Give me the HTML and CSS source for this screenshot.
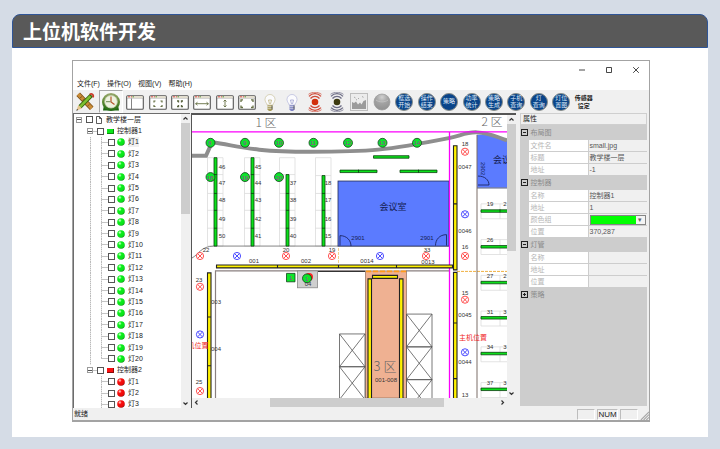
FILE: index.html
```html
<!DOCTYPE html>
<html lang="zh-CN">
<head>
<meta charset="utf-8">
<meta name="viewport" content="width=device-width, initial-scale=1">
<title>上位机软件开发</title>
<link rel="stylesheet" href="styles.css">
</head>
<body>
<svg class="defs" aria-hidden="true">
  <defs>
    <radialGradient id="gGreen" cx=".35" cy=".3" r=".8"><stop offset="0" stop-color="#e8ffe0"/><stop offset=".3" stop-color="#0bf01a"/><stop offset=".75" stop-color="#0be01a"/><stop offset="1" stop-color="#056c0a"/></radialGradient>
    <radialGradient id="gRed" cx=".35" cy=".3" r=".8"><stop offset="0" stop-color="#ffe4dc"/><stop offset=".3" stop-color="#fa0f0f"/><stop offset=".75" stop-color="#e80808"/><stop offset="1" stop-color="#6c0505"/></radialGradient>
    <radialGradient id="gGray" cx=".5" cy=".2" r=".9"><stop offset="0" stop-color="#d0d0d0"/><stop offset=".4" stop-color="#a4a4a4"/><stop offset="1" stop-color="#8c8c8c"/></radialGradient>
    <linearGradient id="gClock" x1="0" y1="0" x2="0" y2="1"><stop offset="0" stop-color="#9aa86e"/><stop offset=".5" stop-color="#5d8a34"/><stop offset="1" stop-color="#1f6a12"/></linearGradient>
    <symbol id="on" viewBox="0 0 8 8"><circle cx="4" cy="4" r="3.8" fill="url(#gGreen)"/></symbol>
    <symbol id="off" viewBox="0 0 8 8"><circle cx="4" cy="4" r="3.8" fill="url(#gRed)"/></symbol>
    <symbol id="win" viewBox="0 0 18 16"><rect x=".7" y="1.7" width="16.6" height="13.6" rx="1" fill="#fff" stroke="#555" stroke-width="1.1"/><rect x="1.4" y="2.3" width="15.2" height="1.6" fill="#e8e3cf"/><path d="M2 2.8h2M5 2.8h1" stroke="#e05050"/><path d="M6.500 2.800h1.500" stroke="#5a9a3a"/><path d="M1 4.300h16" stroke="#999" stroke-width=".5"/></symbol>
    <symbol id="bulb" viewBox="0 0 18 20"><path d="M4 7.500a5 5 0 0 1 10 0c0 2.500-1.800 3.500-2.200 5.500H6.200C5.800 11 4 10 4 7.500z" fill="#fbfbfd" stroke="currentColor" stroke-opacity=".55" stroke-width=".7"/><path d="M7.500 8l1 4M10.500 8l-1 4M7.500 8h3" stroke="currentColor" stroke-width=".6" fill="none"/><path d="M6.500 13.300h5v4l-1.300 1.700H7.800l-1.300-1.700z" fill="currentColor"/><path d="M6.500 14.500h5M6.500 16.300h5" stroke="#eee" stroke-width=".6"/><path d="M11 13.500v4" stroke="#444" stroke-width=".8"/></symbol>
    <symbol id="radar" viewBox="0 0 18 20"><circle cx="9" cy="10" r="3.300" fill="var(--core)"/><g fill="none" stroke="currentColor" stroke-width="1.300"><path d="M4.500 6.500c2.400-2.800 6.600-2.800 9 0M4.500 13.500c2.400 2.800 6.600 2.800 9 0M3 4.400c3.300-3.600 8.700-3.600 12 0M3 15.600c3.300 3.600 8.700 3.600 12 0"/><path d="M2.500 2.300c3.900-2.700 9.100-2.700 13 0M2.500 17.700c3.900 2.700 9.100 2.700 13 0" stroke-width=".7"/></g></symbol>
    <symbol id="lamp" viewBox="-4 -4 8 8" overflow="visible"><circle r="3.600" fill="#fff" stroke="currentColor" stroke-width=".9"/><path d="M-2.200-2.200L2.200 2.200M2.200-2.200L-2.200 2.200" stroke="currentColor" stroke-width=".9"/></symbol>
  </defs>
</svg>

<main class="card">
  <h1 class="card-title">上位机软件开发</h1>
  <section class="window">
    <div class="titlebar">
      <button type="button" aria-label="最小化"><svg viewBox="0 0 8 8"><path d="M1 4h6"/></svg></button>
      <button type="button" aria-label="最大化"><svg viewBox="0 0 8 8"><path d="M1.500 1.500h5v5h-5z"/></svg></button>
      <button type="button" aria-label="关闭"><svg viewBox="0 0 8 8"><path d="M1.200 1.200l5.600 5.600M6.800 1.200L1.200 6.800"/></svg></button>
    </div>
    <nav class="menubar">
      <button type="button">文件(F)</button>
      <button type="button">操作(O)</button>
      <button type="button">视图(V)</button>
      <button type="button">帮助(H)</button>
    </nav>
    <div class="toolbar">
      <button type="button" class="tool wide" aria-label="编辑"><svg class="i20" viewBox="0 0 20 20"><path d="M3.200 2.200l13.500 14" stroke="#7b4d14" stroke-width="5"/><path d="M3.200 2.200l13.500 14" stroke="#c88b36" stroke-width="3.400"/><path d="M5 6l2-1.500M7.500 8.500l2-1.500M12.500 14l2-1.500" stroke="#6a4212" stroke-width=".7"/><path d="M16.500 3.200L5 14.800" stroke="#34620f" stroke-width="4.200"/><path d="M15.500 4.200L5 14.800" stroke="#7cc030" stroke-width="2.600"/><path d="M14.800 2.600c1.800-1.800 4.400.4 3 2.800" fill="none" stroke="#c83a28" stroke-width="1.800"/><path d="M3.300 13l3.600 3.600L1.500 18.500z" fill="#e5c48c"/><path d="M2 17l1.200 1-1.900.7z" fill="#222"/></svg></button>
      <button type="button" class="tool wide pressed" aria-label="定时"><svg class="i20" viewBox="0 0 20 20"><path d="M3 13l-1 5.500h16L17 13z" fill="#1d6710"/><circle cx="10" cy="10" r="9" fill="url(#gClock)"/><circle cx="10" cy="9.700" r="6.300" fill="#eef2df" stroke="#c7cfae" stroke-width=".8"/><path d="M10 4.500v5.400l3.500 2.600" fill="none" stroke="#b5562c" stroke-width="1.200"/><path d="M5 9.700h4.500" stroke="#6d8753"/></svg></button>
      <div class="tools">
        <button type="button" class="tool" aria-label="左侧栏"><svg class="i18" viewBox="0 0 18 16"><use href="#win"/><path d="M5.500 4.500v10.500" stroke="#666" stroke-width=".8"/></svg></button>
        <button type="button" class="tool" aria-label="放大"><svg class="i18" viewBox="0 0 18 16"><use href="#win"/><path d="M5 8.500v-1.500h1.500M11.500 7h1.500v1.500M5 11v1.500h1.500M13 11v1.500h-1.500" fill="none" stroke="#667044" stroke-width="1.200"/></svg></button>
        <button type="button" class="tool" aria-label="缩小"><svg class="i18" viewBox="0 0 18 16"><use href="#win"/><path d="M6 7h1.500v1.500M12 7h-1.500v1.500M6 12.500h1.500V11M12 12.500h-1.500V11" fill="none" stroke="#5a6440" stroke-width="1.300"/></svg></button>
        <button type="button" class="tool" aria-label="适合宽度"><svg class="i18" viewBox="0 0 18 16"><use href="#win"/><path d="M2.500 9.700h13M4.500 8.200L2.700 9.700l1.800 1.500M13.500 8.200l1.800 1.500-1.800 1.500" fill="none" stroke="#667044" stroke-width=".9"/></svg></button>
        <button type="button" class="tool" aria-label="适合高度"><svg class="i18" viewBox="0 0 18 16"><use href="#win"/><path d="M9 6v7M7.500 7.500L9 6l1.500 1.500M7.500 11.500L9 13l1.500-1.500" fill="none" stroke="#667044" stroke-width=".9"/></svg></button>
        <button type="button" class="tool" aria-label="适合窗口"><svg class="i18" viewBox="0 0 18 16"><use href="#win"/><path d="M3 8V5.800h2M13 5.800h2V8M3 11.500v2h2M15 11.500v2h-2" fill="none" stroke="#667044" stroke-width="1.300"/></svg></button>
        <button type="button" class="tool warm" aria-label="开灯"><svg class="i20" viewBox="0 0 18 20"><use href="#bulb"/></svg></button>
        <button type="button" class="tool cool" aria-label="关灯"><svg class="i20" viewBox="0 0 18 20"><use href="#bulb"/></svg></button>
        <button type="button" class="tool live" aria-label="感应开"><svg class="i20" viewBox="0 0 18 20"><use href="#radar"/></svg></button>
        <button type="button" class="tool idle" aria-label="感应关"><svg class="i20" viewBox="0 0 18 20"><use href="#radar"/></svg></button>
        <button type="button" class="tool" aria-label="图片"><svg class="i18 tall" viewBox="0 0 18 18"><rect x=".5" y=".5" width="17" height="17" fill="#ececec" stroke="#bdbdbd"/><path d="M2 16V9l2 1 2-1.500 2 3 2-2 1.500 2 2-3.500 2.500-1v9z" fill="#9b9b9b"/><path d="M4 4l1.500 1M8 5l1 1M12 3.500l1.500.8M6 6.500l1 .5" stroke="#aaa"/></svg></button>
        <button type="button" class="tool" aria-label="停止"><svg class="i18 tall" viewBox="0 0 18 18"><circle cx="9" cy="9" r="8" fill="url(#gGray)" stroke="#999" stroke-width=".7"/><path d="M3 7c3 2.500 9 2.500 12 0" fill="none" stroke="#c4c4c4" stroke-width=".8"/></svg></button>
        <button type="button" class="tool round"><span>框选<br>开始</span></button>
        <button type="button" class="tool round"><span>操作<br>结束</span></button>
        <button type="button" class="tool round"><span>策略</span></button>
        <button type="button" class="tool round"><span>功率<br>统计</span></button>
        <button type="button" class="tool round"><span>策略<br>生成</span></button>
        <button type="button" class="tool round"><span>子机<br>查询</span></button>
        <button type="button" class="tool round"><span>灯<br>查询</span></button>
        <button type="button" class="tool round"><span>灯位<br>置图</span></button>
        <button type="button" class="tool plain"><span>传感器<br>设定</span></button>
      </div>
    </div>

    <div class="panes">
      <div class="tree-pane">
        <ul class="tree">
          <li class="root"><button type="button" class="exp" aria-label="折叠"></button><label><input type="checkbox"><svg viewBox="0 0 8 8"><path d="M1.500.5h3l2 2v5h-5zM4.500.5v2h2" fill="#fff" stroke="#333" stroke-width=".8"/></svg>教学楼一层</label></li>
          <li class="ctrl"><button type="button" class="exp" aria-label="折叠"></button><label><input type="checkbox"><svg viewBox="0 0 8 8"><path d="M1 2h7v5H1z" fill="#0a8a0a"/><path d="M1 2h6v4H1z" fill="#0be81a"/></svg>控制器1</label></li>
          <li class="lamp joined sel"><label><input type="checkbox"><svg><use href="#on"/></svg><span>灯1</span></label></li>
          <li class="lamp joined"><label><input type="checkbox"><svg><use href="#on"/></svg>灯2</label></li>
          <li class="lamp joined"><label><input type="checkbox"><svg><use href="#on"/></svg>灯3</label></li>
          <li class="lamp joined"><label><input type="checkbox"><svg><use href="#on"/></svg>灯4</label></li>
          <li class="lamp joined"><label><input type="checkbox"><svg><use href="#on"/></svg>灯5</label></li>
          <li class="lamp joined"><label><input type="checkbox"><svg><use href="#on"/></svg>灯6</label></li>
          <li class="lamp joined"><label><input type="checkbox"><svg><use href="#on"/></svg>灯7</label></li>
          <li class="lamp joined"><label><input type="checkbox"><svg><use href="#on"/></svg>灯8</label></li>
          <li class="lamp joined"><label><input type="checkbox"><svg><use href="#on"/></svg>灯9</label></li>
          <li class="lamp joined"><label><input type="checkbox"><svg><use href="#on"/></svg>灯10</label></li>
          <li class="lamp joined"><label><input type="checkbox"><svg><use href="#on"/></svg>灯11</label></li>
          <li class="lamp joined"><label><input type="checkbox"><svg><use href="#on"/></svg>灯12</label></li>
          <li class="lamp joined"><label><input type="checkbox"><svg><use href="#on"/></svg>灯13</label></li>
          <li class="lamp joined"><label><input type="checkbox"><svg><use href="#on"/></svg>灯14</label></li>
          <li class="lamp joined"><label><input type="checkbox"><svg><use href="#on"/></svg>灯15</label></li>
          <li class="lamp joined"><label><input type="checkbox"><svg><use href="#on"/></svg>灯16</label></li>
          <li class="lamp joined"><label><input type="checkbox"><svg><use href="#on"/></svg>灯17</label></li>
          <li class="lamp joined"><label><input type="checkbox"><svg><use href="#on"/></svg>灯18</label></li>
          <li class="lamp joined"><label><input type="checkbox"><svg><use href="#on"/></svg>灯19</label></li>
          <li class="lamp joined last"><label><input type="checkbox"><svg><use href="#on"/></svg>灯20</label></li>
          <li class="ctrl"><button type="button" class="exp" aria-label="折叠"></button><label><input type="checkbox"><svg viewBox="0 0 8 8"><path d="M1 2h7v5H1z" fill="#8a0a0a"/><path d="M1 2h6v4H1z" fill="#fa0f0f"/></svg>控制器2</label></li>
          <li class="lamp"><label><input type="checkbox"><svg><use href="#off"/></svg>灯1</label></li>
          <li class="lamp"><label><input type="checkbox"><svg><use href="#off"/></svg>灯2</label></li>
          <li class="lamp"><label><input type="checkbox"><svg><use href="#off"/></svg>灯3</label></li>
        </ul>
        <div class="vbar"><svg viewBox="0 0 9 9"><path d="M2.500 5.500l2-2 2 2"/></svg><i class="thumb tree-thumb"></i><svg class="end" viewBox="0 0 9 9"><path d="M2.500 3.500l2 2 2-2"/></svg></div>
      </div>

      <div class="plan-pane">
        <svg class="plan" viewBox="192 114 315 285" preserveAspectRatio="none" role="img" aria-label="楼层平面图">
          <g fill="none" stroke="#dcdcdc" stroke-width=".8">
            <path d="M207.500 157h15.500v89h-15.500zM207.500 174h15.500M207.500 193h15.500M207.500 210h15.500M207.500 228h15.500"/>
            <path d="M244.500 157h15.500v89h-15.500zM244.500 174h15.500M244.500 193h15.500M244.500 210h15.500M244.500 228h15.500"/>
            <path d="M279.500 157h15.500v89h-15.500zM279.500 174h15.500M279.500 193h15.500M279.500 210h15.500M279.500 228h15.500"/>
            <path d="M315.500 157h15.500v89h-15.500zM315.500 175h15.500M315.500 193h15.500M315.500 210h15.500M315.500 228h15.500"/>
            <path d="M507 203.500h-26v15h26M500 203.500v15M507 239.500h-26v15h26M500 239.500v15M507 275.500h-26v15h26M500 275.500v15M507 311.500h-26v15h26M500 311.500v15M507 347.500h-26v15h26M500 347.500v15M507 383.500h-26v15h26M500 383.500v15"/>
          </g>
          <path d="M192 258c6-3 9-12 22-12h235" fill="none" stroke="#777" stroke-width=".9"/>
          <path d="M215.500 399V271h150M406 271h43" fill="none" stroke="#8a8080" stroke-width="1.200"/>
          <path d="M318 271.500h47" stroke="#222"/>
          <path d="M338.500 248v16" stroke="#f3d08c" stroke-dasharray="3 1"/>
          <path d="M457 271.500h50" stroke="#f0b040" stroke-dasharray="3 1"/>
          <rect x="338" y="180.500" width="111" height="65.500" fill="#5b7bff" stroke="#222b55" stroke-width=".8"/>
          <path d="M477 134q15-2 30 6v47h-30z" fill="#5b7bff"/>
          <path d="M477 187.500h30" stroke="#222b55" stroke-width=".8"/>
          <path d="M477 134v265" stroke="#7a6c66"/>
          <path d="M340 235.500c7 0 11 5 11 10.500M340 235.500v10M446.500 234.500c-7 0-11 5-11 11M446.500 234.500v11M478 175.500c7 0 11 4 11 9h-11" fill="none" stroke="#141c50" stroke-width=".8"/>
          <path d="M192 155h14l6-13.500c25 3 35 9.500 98 9.500 60 0 75-1 140-14 10-2 17-6 27-5.500 12 .5 18 4 30 8" fill="none" stroke="#8e8e8e" stroke-width="4"/>
          <path d="M192 131h315M449.500 131v268" fill="none" stroke="#fb00fb" stroke-width="1.300"/>

          <g fill="#0be01a" stroke="#093f0c" stroke-width=".8">
            <path d="M214 157h3v89h-3zM251 157h3v89h-3zM286 174h3v72h-3zM322 175h3v71h-3z"/>
            <path d="M373.500 155h35.500v2.500h-35.500zM340 169.500h37v2.500h-37zM400 169.500h37v2.500h-37z"/>
            <path d="M481 209.500h28v2.500h-28zM481 245.500h28v2.500h-28zM481 281.500h28v2.500h-28zM481 317h28v2.500h-28zM481 353h28v2.500h-28zM481 389h28v2.500h-28z"/>
            <path d="M214 174h3M214 193h3M214 210h3M214 228h3M251 174h3M251 193h3M251 210h3M251 228h3M286 193h3M286 210h3M286 228h3M322 193h3M322 210h3M322 228h3M358.500 169v3M418.500 169v3M500 209v3"/>
          </g>

          <path d="M365.500 271h41v128h-41z" fill="#efb192" stroke="#8a6a5a" stroke-width=".7"/>
          <path d="M366 271.500h40" stroke="#ff9a1a" stroke-width="1.600" stroke-dasharray="5 2"/>
          <g fill="#fff200" stroke="#222" stroke-width="1.100">
            <path d="M216.500 265h236v3h-236zM453.500 145h3.500v125h-3.500zM453.500 272.500h3.500v128h-3.500zM207.500 273h3.500v128h-3.500zM368 279h3.500v122H368zM399.500 279h3.500v122h-3.500zM372.500 275.500h25v3h-25z"/>
            <path d="M277.500 265v3M338.500 265v3M396.500 265v3M453 203.500h4M453 323.500h4M453 379.500h4M207 317.500h4M207 366.500h4"/>
          </g>
          <g fill="none" stroke="#555" stroke-width=".8">
            <path d="M339.500 334.500h25.500v33h-25.500zl25.500 33M365 334.500l-25.500 33M339.500 367.500h25.500v33h-25.500zl25.500 33M365 367.500l-25.500 33"/>
            <path d="M406.500 314.500h25.500v33h-25.500zl25.500 33M432 314.500l-25.500 33M406.500 347.500h25.500v33h-25.500zl25.500 33M432 347.500l-25.500 33M406.500 380.500h25.500v33h-25.500zl25.500 33M432 380.500l-25.500 33"/>
          </g>

          <g class="red">
            <use href="#lamp" x="196" y="252" width="8" height="8"/><use href="#lamp" x="282" y="252" width="8" height="8"/><use href="#lamp" x="328" y="252" width="8" height="8"/><use href="#lamp" x="422" y="252" width="8" height="8"/>
            <use href="#lamp" x="461" y="147" width="8" height="8"/><use href="#lamp" x="461" y="252" width="8" height="8"/><use href="#lamp" x="461" y="296" width="8" height="8"/><use href="#lamp" x="196" y="283" width="8" height="8"/><use href="#lamp" x="196" y="388" width="8" height="8"/>
          </g>
          <g class="blue">
            <use href="#lamp" x="233" y="252" width="8" height="8"/><use href="#lamp" x="376" y="252" width="8" height="8"/><use href="#lamp" x="461" y="210" width="8" height="8"/><use href="#lamp" x="461" y="349" width="8" height="8"/><use href="#lamp" x="196" y="331" width="8" height="8"/>
          </g>

          <rect x="297.500" y="271" width="20" height="17" fill="#cfcfcf" stroke="#888" stroke-width=".8"/>
          <circle cx="309" cy="277" r="4" fill="#f22"/>
          <g fill="#0be62a" stroke="#14401a" stroke-width=".8">
            <circle cx="210.500" cy="142" r="4.500"/><circle cx="245" cy="142" r="4.500"/><circle cx="279" cy="142" r="4.500"/><circle cx="313.500" cy="142" r="4.500"/><circle cx="348" cy="142" r="4.500"/><circle cx="382.500" cy="142" r="4.500"/><circle cx="417" cy="142" r="4.500"/>
            <circle cx="210.500" cy="176.500" r="4.500"/><circle cx="245" cy="176.500" r="4.500"/><circle cx="279" cy="176.500" r="4.500"/>
            <circle cx="307" cy="278.500" r="4.500"/><path d="M286.500 273.500h8.500v8.500h-8.500z"/>
          </g>
          <g class="tag">
            <text x="210" y="144">8</text><text x="245" y="144">9</text><text x="279" y="144">10</text><text x="313" y="144">11</text><text x="348" y="144">12</text><text x="382" y="144">13</text><text x="417" y="144">14</text>
            <text x="210" y="179">18</text><text x="245" y="179">19</text><text x="279" y="179">20</text><text x="291" y="280">1</text><text x="307" y="281">1</text>
          </g>
          <g class="num">
            <text x="222" y="168">46</text><text x="222" y="185">47</text><text x="222" y="202">48</text><text x="222" y="221">49</text><text x="222" y="238">50</text>
            <text x="258" y="168">45</text><text x="258" y="185">44</text><text x="258" y="202">43</text><text x="258" y="221">42</text><text x="258" y="238">41</text>
            <text x="293" y="185">37</text><text x="293" y="202">38</text><text x="293" y="221">39</text><text x="293" y="238">40</text>
            <text x="328" y="185">18</text><text x="328" y="202">17</text><text x="328" y="221">16</text><text x="328" y="238">15</text>
            <text x="206" y="252">22</text><text x="286" y="252">20</text><text x="332" y="252">19</text><text x="427" y="252">33</text>
            <text x="254" y="263">001</text><text x="306" y="263">002</text><text x="367" y="263">0014</text><text x="428" y="264">0013</text>
            <text x="199" y="282">23</text><text x="216" y="304">003</text><text x="216" y="352">004</text><text x="199" y="385">25</text><text x="308" y="286">04</text>
            <text x="465" y="145">18</text><text x="465" y="168">0047</text><text x="465" y="233">0046</text><text x="465" y="249">16</text><text x="465" y="295">15</text><text x="465" y="317">0045</text><text x="465" y="365">0044</text><text x="465" y="398">13</text>
            <text x="490" y="206">19</text><text x="490" y="242">26</text><text x="490" y="278">27</text><text x="490" y="314">31</text><text x="490" y="350">34</text><text x="490" y="386">37</text>
            <text x="505" y="206">2</text><text x="505" y="278">2</text><text x="505" y="314">3</text><text x="505" y="350">3</text><text x="505" y="386">3</text>
            <text x="386" y="383">001-008</text>
            <g class="navy"><text x="358" y="240">2901</text><text x="427" y="240">2901</text><text transform="translate(481 168) rotate(90)">2902</text></g>
          </g>
          <g class="zone"><text x="266" y="126">1 区</text><text x="492" y="125">2 区</text><text x="385" y="372" class="big">3 区</text></g>
          <g class="room"><text x="393" y="210">会议室</text><text x="502" y="162">会议</text></g>
          <g class="host"><text x="473" y="341">主机位置</text><text x="198" y="349">机位置</text></g>
        </svg>
        <div class="vbar"><svg viewBox="0 0 9 9"><path d="M2.500 5.500l2-2 2 2"/></svg><i class="thumb plan-thumb"></i><svg class="end" viewBox="0 0 9 9"><path d="M2.500 3.500l2 2 2-2"/></svg></div>
        <div class="hbar"><svg viewBox="0 0 9 9"><path d="M5.500 2.500l-2 2 2 2"/></svg><span class="track"><i class="thumb"></i></span><svg viewBox="0 0 9 9"><path d="M3.500 2.500l2 2-2 2"/></svg></div>
      </div>

      <aside class="props">
        <h2>属性</h2>
        <div class="prop-body">
          <table>
            <colgroup><col class="c-exp"><col class="c-name"><col></colgroup>
            <tbody>
              <tr class="grp"><td><button type="button" aria-label="折叠布局图"></button></td><th colspan="2">布局图</th></tr>
              <tr><td></td><th>文件名</th><td>small.jpg</td></tr>
              <tr><td></td><th>标题</th><td>教学楼一层</td></tr>
              <tr><td></td><th>地址</th><td>-1</td></tr>
              <tr class="grp"><td><button type="button" aria-label="折叠控制器"></button></td><th colspan="2">控制器</th></tr>
              <tr><td></td><th>名称</th><td>控制器1</td></tr>
              <tr><td></td><th>地址</th><td>1</td></tr>
              <tr><td></td><th><label for="color">颜色组</label></th><td><div class="pick"><select id="color"><option value="lime" label=" "></option></select></div></td></tr>
              <tr><td></td><th>位置</th><td>370,287</td></tr>
              <tr class="grp"><td><button type="button" aria-label="折叠灯管"></button></td><th colspan="2">灯管</th></tr>
              <tr><td></td><th>名称</th><td></td></tr>
              <tr><td></td><th>地址</th><td></td></tr>
              <tr><td></td><th>位置</th><td></td></tr>
              <tr class="grp"><td><button type="button" class="plus" aria-label="展开策略"></button></td><th colspan="2">策略</th></tr>
            </tbody>
          </table>
        </div>
      </aside>
    </div>

    <footer class="status">
      <span class="ready">就绪</span>
      <span class="cell"></span><span class="cell num-lock">NUM</span><span class="cell"></span>
      <svg class="grip" viewBox="0 0 10 10"><path d="M1 10l9-9M4 10l6-6M7 10l3-3" stroke="#a5a5a5" stroke-width="1.200"/></svg>
    </footer>
  </section>
</main>
</body>
</html>
```
FILE: styles.css
```css
* { box-sizing: border-box; }

html, body { height: 100%; }

body {
  margin: 0;
  padding: 14px 12px 12px;
  background: #d5dce6;
  color: #222;
  font: 7px/10px "Liberation Sans", "Noto Sans CJK SC", sans-serif;
}

button {
  margin: 0;
  padding: 0;
  border: 0;
  background: none;
  color: inherit;
  font: inherit;
}

svg { display: block; flex: none; }
.defs { position: absolute; width: 0; height: 0; }

.card {
  display: flex;
  flex-direction: column;
  height: 100%;
  background: #fff;
  border-radius: 8px 8px 0 0;
}

.card-title {
  flex: none;
  margin: 0;
  padding: 0 10px;
  border: 1px solid #2f5597;
  border-radius: 8px 8px 0 0;
  background: #595959;
  color: #fff;
  font: bold 19px/32px "Noto Sans CJK SC", sans-serif;
}

.window {
  flex: 1;
  display: flex;
  flex-direction: column;
  min-height: 0;
  margin: 12px 58px 15px 60px;
  border: 1px solid #a3a3a3;
  border-width: 1px 1px 2px;
  background: #f0f0f0;
}

/* caption and menu */
.titlebar {
  display: flex;
  justify-content: flex-end;
  height: 17px;
  background: #fff;
}
.titlebar button { display: grid; place-items: center; width: 27px; }
.titlebar svg { width: 8px; height: 8px; fill: none; stroke: #333; stroke-width: .9; }

.menubar {
  display: flex;
  gap: 7px;
  height: 12px;
  padding-left: 4px;
  background: #fff;
}

/* toolbar */
.toolbar {
  display: flex;
  height: 23px;
  padding-right: 54px;
}
.tool {
  display: grid;
  place-items: center;
  flex: 1 1 0;
  min-width: 0;
}
.tool.wide { flex: none; width: 24px; }
.tool.pressed {
  margin: 0 1px 0 2px;
  border: 1px solid #a8a8a8;
  border-color: #a8a8a8 #fff #fff #a8a8a8;
  background: #f7f7f7;
}
.tools { flex: 1; display: flex; }
.i20 { width: 20px; height: 20px; }
.i18 { width: 18px; height: 16px; }
.i18.tall { height: 18px; }
.warm { color: #a89c58; }
.cool { color: #7f84c4; }
.live { color: #cf4a38; --core: #d2300c; }
.idle { color: #6e6e86; --core: #3c3a10; }
.round span {
  display: grid;
  place-content: center;
  width: 18px;
  height: 18px;
  border: 1px solid #8a8f8c;
  border-radius: 50%;
  background: #0a4489;
  color: #dfe9f8;
  font-size: 6px;
  line-height: 7px;
  white-space: nowrap;
}
.plain { font-size: 6px; line-height: 8px; font-weight: bold; white-space: nowrap; }

/* three panes */
.panes {
  flex: 1;
  display: grid;
  grid-template-columns: 117px 1fr 129px;
  grid-template-rows: 100%;
  gap: 1px;
  min-height: 0;
}

.tree-pane {
  display: flex;
  min-height: 0;
  border: 1px solid #6c6c6c;
  border-width: 1px 0 0 1px;
  background: #fff;
  overflow: hidden;
}
.tree {
  flex: 1;
  display: flex;
  flex-direction: column;
  margin: 0 0 -2px;
  padding: 0;
  list-style: none;
}
.tree li { flex: 1 1 0; display: flex; align-items: center; min-height: 0; }
.tree label { display: flex; align-items: center; height: 10px; }
.tree svg { width: 8px; height: 8px; margin: 0 3px 0 2px; }
.tree input {
  appearance: none;
  width: 7px;
  height: 7px;
  margin: 0;
  border: 1px solid #555;
  background: #fff;
}
.root { padding-left: 2px; }
.ctrl { padding-left: 13px; background: linear-gradient(#c4c4c4, #c4c4c4) 19px 50% / 5px 1px no-repeat; }
.lamp {
  padding-left: 34px;
  background:
    linear-gradient(#c4c4c4, #c4c4c4) 27px 50% / 7px 1px no-repeat,
    repeating-linear-gradient(#bbb 0 1px, #e4e4e4 1px 2px) 27px 0 / 1px 100% no-repeat;
}
.lamp.joined {
  background:
    linear-gradient(#c4c4c4, #c4c4c4) 27px 50% / 7px 1px no-repeat,
    repeating-linear-gradient(#bbb 0 1px, #e4e4e4 1px 2px) 27px 0 / 1px 100% no-repeat,
    repeating-linear-gradient(#bbb 0 1px, #e4e4e4 1px 2px) 16px 0 / 1px 100% no-repeat;
}
.lamp.joined.last {
  background:
    linear-gradient(#c4c4c4, #c4c4c4) 27px 50% / 7px 1px no-repeat,
    repeating-linear-gradient(#bbb 0 1px, #e4e4e4 1px 2px) 27px 0 / 1px 50% no-repeat,
    repeating-linear-gradient(#bbb 0 1px, #e4e4e4 1px 2px) 16px 0 / 1px 100% no-repeat;
}
.sel span { background: #f0f0f0; }
.exp {
  width: 6px;
  height: 6px;
  margin-right: 4px;
  border: 1px solid #9a9a9a;
  background: linear-gradient(#555, #555) center / 4px 1px no-repeat #fff;
}

/* scroll bars */
.vbar, .hbar { display: flex; background: #f0f0f0; }
.vbar { flex-direction: column; width: 9px; }
.vbar svg, .hbar svg { width: 9px; height: 9px; fill: none; stroke: #333; stroke-width: 1.2; }
.vbar .end { margin-top: auto; }
.thumb { background: #cdcdcd; }
.tree-thumb { height: 31%; }
.plan-thumb { height: 45%; }

.plan-pane {
  display: grid;
  grid-template: minmax(0, 1fr) 9px / minmax(0, 1fr) 9px;
  min-height: 0;
  margin-right: 3px;
  padding-bottom: 1px;
  border: 1px solid #555;
  border-width: 2px 0 0 1px;
  background: #f0f0f0;
}
.plan { width: 100%; height: 100%; background: #fff; }
.hbar { grid-column: 1; }
.track { flex: 1; display: flex; padding: 0 17% 0 22%; }
.track .thumb { flex: 1; }

/* floor plan text */
.plan text { text-anchor: middle; font-size: 6px; fill: #333; }
.plan .tag text { fill: #a8329c; }
.plan .navy text { fill: #141c50; }
.plan .zone text { font-size: 12px; fill: #666; font-family: "Noto Sans CJK SC", sans-serif; font-weight: 300; }
.plan .zone .big { font-size: 13px; }
.plan .room text { font-size: 9px; fill: #141c50; font-family: "Noto Sans CJK SC", sans-serif; }
.plan .host text { font-size: 7px; fill: #f02828; }
.red { color: #ff3b3b; }
.blue { color: #3535ff; }

/* property grid */
.props {
  display: flex;
  flex-direction: column;
  min-height: 0;
  padding: 0 2px 2px 0;
}
.props h2 {
  margin: 0;
  padding-left: 2px;
  border: 1px solid #cfcfcf;
  font-size: 7px;
  font-weight: normal;
  line-height: 10px;
}
.prop-body { flex: 1; background: #cdcdcd; }
table { width: 100%; table-layout: fixed; border-collapse: collapse; }
.c-exp { width: 8px; }
.c-name { width: 60px; }
tr { height: 12px; }
.grp { height: 14px; }
th, td {
  padding: 0 1px;
  color: #555;
  font-weight: normal;
  line-height: 10px;
  text-align: left;
  white-space: nowrap;
}
th { padding-left: 2px; background: #fff; border: 1px solid #cdcdcd; color: #b5b5b5; }
td:last-child { background: #f0f0f0; border: 1px solid #cdcdcd; border-right: 0; }
td:first-child { background: #cdcdcd; }
.grp th { background: #cdcdcd; color: #8a8a8a; }
.grp button {
  display: block;
  width: 7px;
  height: 7px;
  border: 1px solid #222;
  background: linear-gradient(#222, #222) center / 3px 1px no-repeat;
}
.grp .plus {
  background:
    linear-gradient(#222, #222) center / 3px 1px no-repeat,
    linear-gradient(#222, #222) center / 1px 3px no-repeat;
}
.pick { position: relative; height: 10px; }
.pick select {
  appearance: none;
  display: block;
  width: 100%;
  height: 10px;
  padding: 0;
  border: 1px solid #858585;
  background: #00ff00;
  font-size: 7px;
}
.pick::after {
  content: "▾";
  position: absolute;
  top: 1px;
  right: 1px;
  width: 9px;
  height: 8px;
  background: #f4f4f4;
  color: #666;
  line-height: 8px;
  text-align: center;
  pointer-events: none;
}

/* status bar */
.status {
  display: flex;
  gap: 2px;
  height: 12px;
  padding: 1px 0 0 1px;
}
.ready { flex: 1; }
.cell {
  width: 18px;
  border: 1px solid #bdbdbd;
  border-color: #bdbdbd #fff #fff #bdbdbd;
}
.num-lock { width: 21px; font-size: 8px; line-height: 9px; text-align: center; }
.grip { align-self: flex-end; width: 9px; height: 9px; }
```
